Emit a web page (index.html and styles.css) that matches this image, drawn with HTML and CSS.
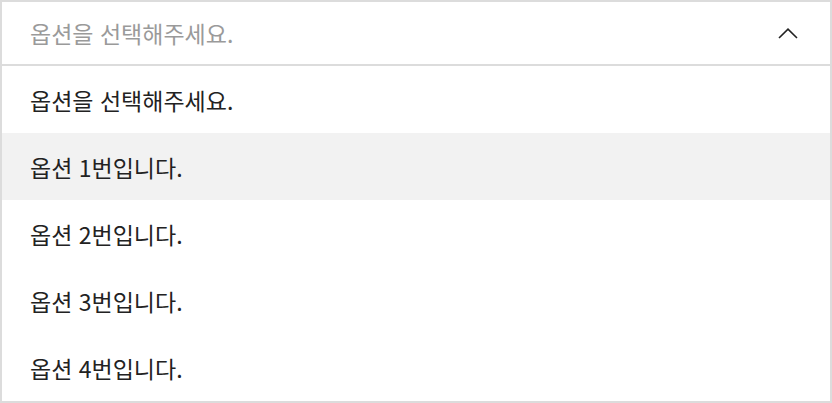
FILE: index.html
```html
<!DOCTYPE html>
<html lang="ko">
<head>
<meta charset="utf-8">
<link rel="stylesheet" href="styles.css">
</head>
<body>
<div class="select">
  <div class="select-head">
    <span class="placeholder">옵션을 선택해주세요.</span>
    <svg class="chevron" width="20" height="11" viewBox="0 0 20 11"><path d="M1 10 L10 1.2 L19 10" fill="none" stroke="#222" stroke-width="1.6"/></svg>
  </div>
  <ul class="options">
    <li class="option">옵션을 선택해주세요.</li>
    <li class="option active">옵션 1번입니다.</li>
    <li class="option">옵션 2번입니다.</li>
    <li class="option">옵션 3번입니다.</li>
    <li class="option">옵션 4번입니다.</li>
  </ul>
</div>
</body>
</html>
```
FILE: styles.css
```css
html, body {
  margin: 0;
  padding: 0;
  background: #fff;
}
body {
  font-family: "Noto Sans CJK KR", "Noto Sans", sans-serif;
}
.select {
  width: 832px;
  height: 403px;
  box-sizing: border-box;
  border: 2px solid #dcdcdc;
  display: flex;
  flex-direction: column;
}
.select-head {
  height: 62px;
  border-bottom: 2px solid #dcdcdc;
  display: flex;
  align-items: center;
  justify-content: space-between;
  padding: 0 32px 0 28px;
}
.placeholder {
  font-size: 23px;
  color: #9a9a9a;
}
.chevron {
  display: block;
}
.options {
  list-style: none;
  margin: 0;
  padding: 0;
}
.option {
  height: 67px;
  display: flex;
  align-items: center;
  padding-left: 28px;
  font-size: 23px;
  color: #222;
}
.option.active {
  background: #f2f2f2;
}
```
